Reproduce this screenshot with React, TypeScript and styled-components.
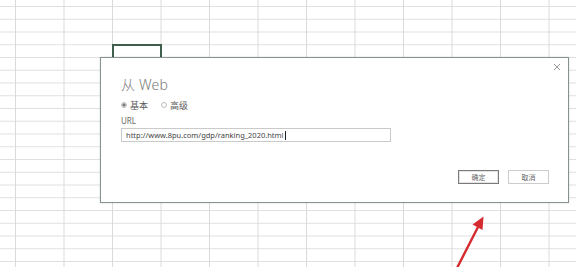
import styled, { createGlobalStyle } from "styled-components";

const GlobalStyle = createGlobalStyle`
  html, body {
    margin: 0;
    padding: 0;
    background: #ffffff;
    overflow: hidden;
  }
  body {
    font-family: "Noto Sans", "Noto Sans CJK SC", sans-serif;
  }
`;

const App = () => {
  return (
    <>
      <GlobalStyle />
      <Sheet>
        <ActiveCell>
          <FillHandle />
        </ActiveCell>
        <Dialog>
          <CloseButton aria-label="close">
            <svg width="8" height="8" viewBox="0 0 8 8">
              <path d="M1 1 L7 7 M7 1 L1 7" stroke="#9a9a9a" strokeWidth="1" />
            </svg>
          </CloseButton>
          <Title>从 Web</Title>
          <RadioRow>
            <RadioItem>
              <Radio $checked />
              基本
            </RadioItem>
            <RadioItem>
              <Radio />
              高级
            </RadioItem>
          </RadioRow>
          <Label>URL</Label>
          <UrlInput>
            http://www.8pu.com/gdp/ranking_2020.html
            <Caret />
          </UrlInput>
          <Footer>
            <Button $primary>确定</Button>
            <Button>取消</Button>
          </Footer>
        </Dialog>
        <Arrow width="576" height="267" viewBox="0 0 576 267">
          <line x1="456" y1="270" x2="478" y2="227" stroke="#d52b30" strokeWidth="2.4" />
          <polygon points="483.5,216.5 472.5,224.5 482.5,230" fill="#d52b30" />
        </Arrow>
      </Sheet>
    </>
  );
};

const Sheet = styled.div`
  position: relative;
  width: 576px;
  height: 267px;
  background-color: #ffffff;
  background-image: linear-gradient(to right, #dadada 1px, transparent 1px),
    linear-gradient(to bottom, #e0e0e0 1px, transparent 1px);
  background-size: 48.5px 12.75px;
  background-position: 15px 6px;
  overflow: hidden;
`;

const ActiveCell = styled.div`
  position: absolute;
  left: 112px;
  top: 44px;
  width: 46px;
  height: 14px;
  border: 2px solid #3f5e4c;
`;

const FillHandle = styled.div`
  position: absolute;
  right: -4px;
  bottom: -4px;
  width: 4px;
  height: 4px;
  background: #3f5e4c;
  border: 1px solid #ffffff;
`;

const Dialog = styled.div`
  position: absolute;
  left: 100px;
  top: 57px;
  width: 469px;
  height: 146px;
  background: #ffffff;
  border: 1px solid #87948d;
  box-shadow: 0 0 2px rgba(0, 0, 0, 0.15);
  padding: 19px 0 0 20px;
  box-sizing: border-box;
  display: flex;
  flex-direction: column;
`;

const CloseButton = styled.div`
  position: absolute;
  right: 7px;
  top: 5px;
  width: 8px;
  height: 8px;
  display: flex;
`;

const Title = styled.div`
  font-size: 14px;
  line-height: 16px;
  color: #7a7a7a;
  font-weight: 300;
  letter-spacing: 0.2px;
`;

const RadioRow = styled.div`
  display: flex;
  gap: 13px;
  margin-top: 6px;
  height: 12px;
  align-items: center;
`;

const RadioItem = styled.div`
  display: flex;
  align-items: center;
  gap: 3px;
  font-size: 9px;
  color: #5a5a5a;
`;

const Radio = styled.span<{ $checked?: boolean }>`
  width: 6px;
  height: 6px;
  border-radius: 50%;
  border: 1px solid #bdbdbd;
  box-sizing: border-box;
  background: ${(p) => (p.$checked ? "radial-gradient(circle, #7a7a7a 1.3px, #fff 2px)" : "#fff")};
`;

const Label = styled.div`
  margin-top: 5px;
  font-size: 8px;
  line-height: 10px;
  color: #666;
`;

const UrlInput = styled.div`
  margin-top: 2px;
  width: 270px;
  height: 14px;
  box-sizing: border-box;
  border: 1px solid #cacaca;
  padding: 0 4px;
  font-size: 7.5px;
  line-height: 12px;
  color: #444;
  display: flex;
  align-items: center;
  white-space: nowrap;
`;

const Caret = styled.span`
  display: inline-block;
  width: 1px;
  height: 9px;
  background: #222;
  margin-left: 1px;
`;

const Footer = styled.div`
  margin-top: 28px;
  display: flex;
  justify-content: flex-end;
  gap: 9px;
  padding-right: 19px;
`;

const Button = styled.div<{ $primary?: boolean }>`
  width: 41px;
  height: 14px;
  box-sizing: border-box;
  border: 1px solid ${(p) => (p.$primary ? "#7a7a7a" : "#cccccc")};
  box-shadow: ${(p) => (p.$primary ? "inset 0 0 0 1px #e4e4e4" : "none")};
  font-size: 7px;
  color: #666;
  display: flex;
  align-items: center;
  justify-content: center;
`;

const Arrow = styled.svg`
  position: absolute;
  left: 0;
  top: 0;
  pointer-events: none;
`;

export default App;
